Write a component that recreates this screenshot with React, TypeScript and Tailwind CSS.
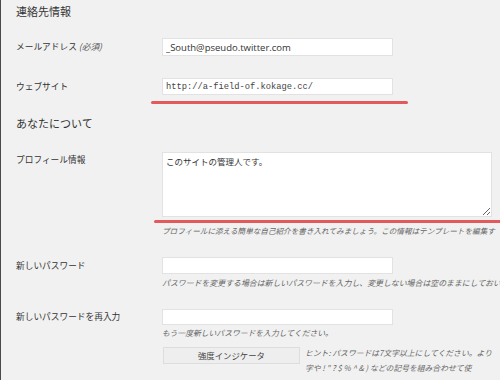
export default function App() {
  const jp = "font-['Noto_Sans_CJK_JP',sans-serif]";
  return (
    <div className={`w-[500px] h-[380px] overflow-hidden bg-[#f1f1f1] border-l border-[#4a4a4a] ${jp} text-[#333]`}>
      <div className="mt-[4px] pl-[15px] text-[11px] leading-[14px] h-[14px]">連絡先情報</div>

      <div className="mt-[20px] grid grid-cols-[161px_1fr] items-center h-[18px]">
        <div className="pl-[15px] text-[8.7px] leading-[12px] whitespace-nowrap">
          メールアドレス <span className="italic text-[#555]">(必須)</span>
        </div>
        <input
          readOnly
          value="_South@pseudo.twitter.com"
          className="w-[231px] h-[18px] bg-white border border-[#e2e2e2] px-[3px] text-[9.5px] text-[#333] font-['Open_Sans',sans-serif] outline-none"
        />
      </div>

      <div className="mt-[22px] grid grid-cols-[161px_1fr] items-center h-[17px]">
        <div className="pl-[15px] text-[8.7px] leading-[12px]">ウェブサイト</div>
        <input
          readOnly
          value="http://a-field-of.kokage.cc/"
          className="w-[231px] h-[17px] bg-white border border-[#e2e2e2] px-[3px] text-[8.75px] text-[#444] font-['Liberation_Mono',monospace] outline-none"
        />
      </div>
      <div className="grid grid-cols-[161px_1fr]">
        <div />
        <div className="mt-[6px] ml-[-11px] w-[257px] h-[3px] rounded-full bg-[#e35a5c]" />
      </div>

      <div className="mt-[12px] pl-[15px] text-[11px] leading-[14px] h-[14px]">あなたについて</div>

      <div className="mt-[22px] grid grid-cols-[161px_1fr] items-start">
        <div className="pl-[15px] pt-[2px] text-[8.7px] leading-[12px]">プロフィール情報</div>
        <textarea
          readOnly
          defaultValue="このサイトの管理人です。"
          className={`block w-[330px] h-[65px] bg-white border border-[#e2e2e2] px-[3px] py-[2px] text-[8.5px] leading-[12px] text-[#333] ${jp} outline-none resize`}
        />
      </div>
      <div className="grid grid-cols-[161px_1fr]">
        <div />
        <div className="mt-[3px] ml-[-8px] w-[360px] h-[3px] rounded-l-full bg-[#e35a5c]" />
      </div>
      <div className="grid grid-cols-[161px_1fr]">
        <div />
        <div className="mt-[2px] text-[7.6px] leading-[12px] italic text-[#666] whitespace-nowrap">
          プロフィールに添える簡単な自己紹介を書き入れてみましょう。この情報はテンプレートを編集す
        </div>
      </div>

      <div className="mt-[20px] grid grid-cols-[161px_1fr] items-center h-[17px]">
        <div className="pl-[15px] text-[8.7px] leading-[12px]">新しいパスワード</div>
        <input readOnly value="" className="w-[231px] h-[17px] bg-white border border-[#e2e2e2] outline-none" />
      </div>
      <div className="grid grid-cols-[161px_1fr]">
        <div />
        <div className="mt-[3px] text-[7.9px] leading-[11px] italic text-[#666] whitespace-nowrap">
          パスワードを変更する場合は新しいパスワードを入力し、変更しない場合は空のままにしておい
        </div>
      </div>

      <div className="mt-[21px] grid grid-cols-[161px_1fr] items-center h-[16px]">
        <div className="pl-[15px] text-[8.7px] leading-[12px] whitespace-nowrap">新しいパスワードを再入力</div>
        <input readOnly value="" className="w-[231px] h-[16px] bg-white border border-[#e2e2e2] outline-none" />
      </div>
      <div className="grid grid-cols-[161px_1fr]">
        <div />
        <div className="mt-[2px] text-[7.8px] leading-[11px] italic text-[#666] whitespace-nowrap">
          もう一度新しいパスワードを入力してください。
        </div>
      </div>

      <div className="mt-[8px] grid grid-cols-[162px_1fr]">
        <div />
        <div className="flex items-start gap-[5px]">
          <div className="mt-[1px] w-[137px] h-[17px] shrink-0 bg-[#eeeeee] border border-[#dddddd] flex items-center justify-center text-[8.4px] text-[#444]">
            強度インジケータ
          </div>
          <div className="mt-[-1px] text-[7.8px] leading-[15px] italic text-[#666] whitespace-nowrap">
            <div>ヒント: パスワードは7文字以上にしてください。より</div>
            <div>字や ! " ? $ % ^ &amp; ) などの記号を組み合わせて使</div>
          </div>
        </div>
      </div>
    </div>
  );
}
